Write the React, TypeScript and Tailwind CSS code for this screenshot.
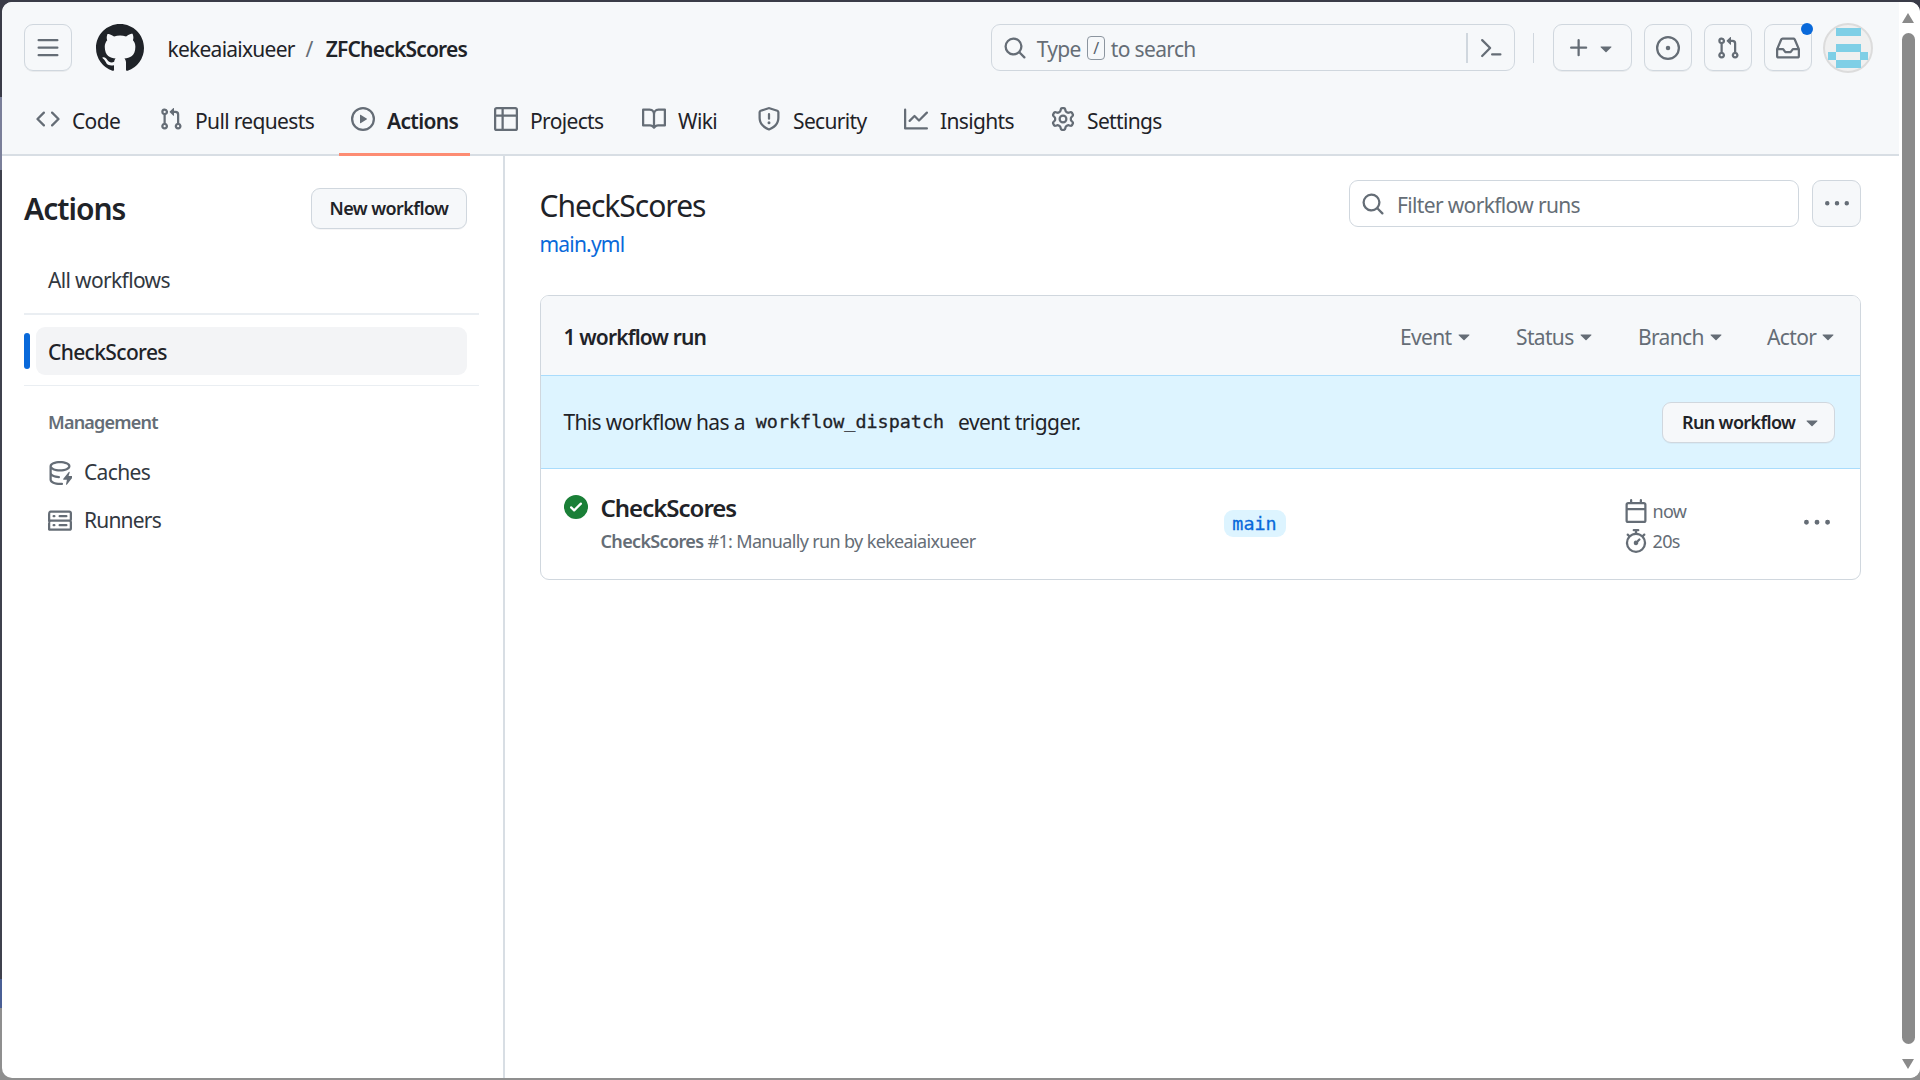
import React from "react";

function Octicon({ size, className, d }: { size: number; className?: string; d: string[] }) {
  return (
    <svg width={size} height={size} viewBox="0 0 16 16" fill="currentColor" className={`shrink-0 ${className ?? ""}`}>
      {d.map((p) => <path key={p} d={p} />)}
    </svg>
  );
}
const BARS = ["M1 2.75A.75.75 0 0 1 1.75 2h12.5a.75.75 0 0 1 0 1.5H1.75A.75.75 0 0 1 1 2.75Zm0 5A.75.75 0 0 1 1.75 7h12.5a.75.75 0 0 1 0 1.5H1.75A.75.75 0 0 1 1 7.75ZM1.75 12h12.5a.75.75 0 0 1 0 1.5H1.75a.75.75 0 0 1 0-1.5Z"];
const MARK = ["M8 0c4.42 0 8 3.58 8 8a8.013 8.013 0 0 1-5.45 7.59c-.4.08-.55-.17-.55-.38 0-.27.01-1.13.01-2.2 0-.75-.25-1.23-.54-1.48 1.78-.2 3.65-.88 3.65-3.95 0-.88-.31-1.59-.82-2.15.08-.2.36-1.02-.08-2.12 0 0-.67-.22-2.2.82-.64-.18-1.32-.27-2-.27-.68 0-1.36.09-2 .27-1.53-1.03-2.2-.82-2.2-.82-.44 1.1-.16 1.92-.08 2.12-.51.56-.82 1.28-.82 2.15 0 3.06 1.86 3.75 3.64 3.95-.23.2-.44.55-.51 1.07-.46.21-1.61.55-2.33-.66-.15-.24-.6-.83-1.23-.82-.67.01-.27.38.01.53.34.19.73.9.82 1.13.16.45.68 1.31 2.69.94 0 .67.01 1.3.01 1.49 0 .21-.15.45-.55.38A7.995 7.995 0 0 1 0 8c0-4.42 3.58-8 8-8Z"];
const CACHE = [
  "M2.5 5.724V8c0 .248.238.7 1.169 1.159.874.43 2.144.745 3.62.822a.75.75 0 1 1-.078 1.498c-1.622-.085-3.102-.432-4.204-.975a5.565 5.565 0 0 1-.507-.28V12.5c0 .133.058.318.282.551.227.237.591.483 1.101.707 1.015.447 2.47.742 4.117.742.406 0 .802-.018 1.183-.052a.751.751 0 1 1 .134 1.494C8.89 15.98 8.45 16 8 16c-1.805 0-3.475-.32-4.721-.869-.623-.274-1.173-.619-1.579-1.041-.408-.425-.7-.964-.7-1.59v-9c0-.626.292-1.165.7-1.591.406-.42.956-.766 1.579-1.04C4.525.32 6.195 0 8 0c1.806 0 3.476.32 4.721.869.623.274 1.173.619 1.579 1.041.408.425.7.964.7 1.59 0 .626-.292 1.165-.7 1.591-.406.42-.956.766-1.578 1.04C11.475 6.68 9.805 7 8 7c-1.805 0-3.475-.32-4.721-.869a6.15 6.15 0 0 1-.779-.407Zm0-2.224c0 .133.058.318.282.551.227.237.591.483 1.101.707C4.898 5.205 6.353 5.5 8 5.5c1.646 0 3.101-.295 4.118-.742.508-.224.873-.471 1.1-.708.224-.232.282-.417.282-.55 0-.133-.058-.318-.282-.551-.227-.237-.591-.483-1.101-.707C11.102 1.795 9.647 1.5 8 1.5c-1.646 0-3.101.295-4.118.742-.508.224-.873.471-1.1.708-.224.232-.282.417-.282.55Z",
  "M14.49 7.582a.375.375 0 0 0-.66-.313l-3.625 4.625a.375.375 0 0 0 .295.606h2.127l-.619 2.922a.375.375 0 0 0 .666.304l3.125-4.125A.375.375 0 0 0 15.5 10h-1.778l.769-2.418Z",
];
const CODE = ["m11.28 3.22 4.25 4.25a.75.75 0 0 1 0 1.06l-4.25 4.25a.749.749 0 0 1-1.275-.326.749.749 0 0 1 .215-.734L13.94 8l-3.72-3.72a.749.749 0 0 1 .326-1.275.749.749 0 0 1 .734.215Zm-6.56 0a.751.751 0 0 1 1.042.018.751.751 0 0 1 .018 1.042L2.06 8l3.72 3.72a.749.749 0 0 1-.326 1.275.749.749 0 0 1-.734-.215L.47 8.53a.75.75 0 0 1 0-1.06Z"];
const PR = ["M1.5 3.25a2.25 2.25 0 1 1 3 2.122v5.256a2.251 2.251 0 1 1-1.5 0V5.372A2.25 2.25 0 0 1 1.5 3.25Zm5.677-.177L9.573.677A.25.25 0 0 1 10 .854V2.5h1A2.5 2.5 0 0 1 13.5 5v5.628a2.251 2.251 0 1 1-1.5 0V5a1 1 0 0 0-1-1h-1v1.646a.25.25 0 0 1-.427.177L7.177 3.427a.25.25 0 0 1 0-.354ZM3.75 2.5a.75.75 0 1 0 0 1.5.75.75 0 0 0 0-1.5Zm0 9.5a.75.75 0 1 0 0 1.5.75.75 0 0 0 0-1.5Zm8.25.75a.75.75 0 1 0 1.5 0 .75.75 0 0 0-1.5 0Z"];
const PLAY = ["M8 0a8 8 0 1 1 0 16A8 8 0 0 1 8 0ZM1.5 8a6.5 6.5 0 1 0 13 0 6.5 6.5 0 0 0-13 0Zm4.879-2.773 4.264 2.559a.25.25 0 0 1 0 .428l-4.264 2.559A.25.25 0 0 1 6 10.559V5.442a.25.25 0 0 1 .379-.215Z"];
const TABLE = ["M0 1.75C0 .784.784 0 1.75 0h12.5C15.216 0 16 .784 16 1.75v12.5A1.75 1.75 0 0 1 14.25 16H1.75A1.75 1.75 0 0 1 0 14.25ZM6.5 6.5v8h7.75a.25.25 0 0 0 .25-.25V6.5Zm8-1.5V1.75a.25.25 0 0 0-.25-.25H6.5V5Zm-13 1.5v7.75c0 .138.112.25.25.25H5v-8ZM5 5V1.5H1.75a.25.25 0 0 0-.25.25V5Z"];
const BOOK = ["M0 1.75A.75.75 0 0 1 .75 1h4.253c1.227 0 2.317.59 3 1.501A3.743 3.743 0 0 1 11.006 1h4.245a.75.75 0 0 1 .75.75v10.5a.75.75 0 0 1-.75.75h-4.507a2.25 2.25 0 0 0-1.591.659l-.622.621a.75.75 0 0 1-1.06 0l-.622-.621A2.25 2.25 0 0 0 5.258 13H.75a.75.75 0 0 1-.75-.75Zm7.251 10.324.004-5.073-.002-2.253A2.25 2.25 0 0 0 5.003 2.5H1.5v9h3.757a3.75 3.75 0 0 1 1.994.574ZM8.755 4.75l-.004 7.322a3.752 3.752 0 0 1 1.992-.572H14.5v-9h-3.495a2.25 2.25 0 0 0-2.25 2.25Z"];
const SHIELD = ["M7.467.133a1.748 1.748 0 0 1 1.066 0l5.25 1.68A1.75 1.75 0 0 1 15 3.48V7c0 1.566-.32 3.182-1.303 4.682-.983 1.498-2.585 2.813-5.032 3.855a1.697 1.697 0 0 1-1.33 0c-2.447-1.042-4.049-2.357-5.032-3.855C1.32 10.182 1 8.566 1 7V3.48a1.75 1.75 0 0 1 1.217-1.667Zm.61 1.429a.25.25 0 0 0-.153 0l-5.25 1.68a.25.25 0 0 0-.174.238V7c0 1.358.275 2.666 1.057 3.86.784 1.194 2.121 2.34 4.366 3.297a.196.196 0 0 0 .154 0c2.245-.956 3.582-2.104 4.366-3.298C13.225 9.666 13.5 8.36 13.5 7V3.48a.251.251 0 0 0-.174-.237l-5.25-1.68ZM8.75 4.75v3a.75.75 0 0 1-1.5 0v-3a.75.75 0 0 1 1.5 0ZM9 10.5a1 1 0 1 1-2 0 1 1 0 0 1 2 0Z"];
const GRAPH = ["M1.5 1.75V13.5h13.75a.75.75 0 0 1 0 1.5H.75a.75.75 0 0 1-.75-.75V1.75a.75.75 0 0 1 1.5 0Zm14.28 2.53-5.25 5.25a.75.75 0 0 1-1.06 0L7 7.06 4.28 9.78a.751.751 0 0 1-1.042-.018.751.751 0 0 1-.018-1.042l3.25-3.25a.75.75 0 0 1 1.06 0L10 7.94l4.72-4.72a.751.751 0 0 1 1.042.018.751.751 0 0 1 .018 1.042Z"];
const GEAR = ["M8 0a8.2 8.2 0 0 1 .701.031C9.444.095 9.99.645 10.16 1.29l.288 1.107c.018.066.079.158.212.224.231.114.454.243.668.386.123.082.233.09.299.071l1.103-.303c.644-.176 1.392.021 1.82.63.27.385.506.792.704 1.218.315.675.111 1.422-.364 1.891l-.814.806c-.049.048-.098.147-.088.294.016.257.016.515 0 .772-.01.147.038.246.088.294l.814.806c.475.469.679 1.216.364 1.891a7.977 7.977 0 0 1-.704 1.217c-.428.61-1.176.807-1.82.63l-1.102-.302c-.067-.019-.177-.011-.3.071a5.909 5.909 0 0 1-.668.386c-.133.066-.194.158-.211.224l-.29 1.106c-.168.646-.715 1.196-1.458 1.26a8.006 8.006 0 0 1-1.402 0c-.743-.064-1.289-.614-1.458-1.26l-.289-1.106c-.018-.066-.079-.158-.212-.224a5.738 5.738 0 0 1-.668-.386c-.123-.082-.233-.09-.299-.071l-1.103.303c-.644.176-1.392-.021-1.82-.63a8.12 8.12 0 0 1-.704-1.218c-.315-.675-.111-1.422.363-1.891l.815-.806c.05-.048.098-.147.088-.294a6.214 6.214 0 0 1 0-.772c.01-.147-.038-.246-.088-.294l-.815-.806C.635 6.045.431 5.298.746 4.623a7.92 7.92 0 0 1 .704-1.217c.428-.61 1.176-.807 1.82-.63l1.102.302c.067.019.177.011.3-.071.214-.143.437-.272.668-.386.133-.066.194-.158.211-.224l.29-1.106C6.009.645 6.556.095 7.299.03 7.53.01 7.764 0 8 0Zm-.571 1.525c-.036.003-.108.036-.137.146l-.289 1.105c-.147.561-.549.967-.998 1.189-.173.086-.34.183-.5.29-.417.278-.97.423-1.529.27l-1.103-.303c-.109-.03-.175.016-.195.045-.22.312-.412.644-.573.99-.014.031-.021.11.059.19l.815.806c.411.406.562.957.53 1.456a4.709 4.709 0 0 0 0 .582c.032.499-.119 1.05-.53 1.456l-.815.806c-.081.08-.073.159-.059.19.162.346.353.677.573.989.02.03.085.076.195.046l1.102-.303c.56-.153 1.113-.008 1.53.27.161.107.328.204.501.29.447.222.85.629.997 1.189l.289 1.105c.029.109.101.143.137.146a6.6 6.6 0 0 0 1.142 0c.036-.003.108-.036.137-.146l.289-1.105c.147-.561.549-.967.998-1.189.173-.086.34-.183.5-.29.417-.278.97-.423 1.529-.27l1.103.303c.109.029.175-.016.195-.045.22-.313.411-.644.573-.99.014-.031.021-.11-.059-.19l-.815-.806c-.411-.406-.562-.957-.53-1.456a4.709 4.709 0 0 0 0-.582c-.032-.499.119-1.05.53-1.456l.815-.806c.081-.08.073-.159.059-.19a6.464 6.464 0 0 0-.573-.989c-.02-.03-.085-.076-.195-.046l-1.102.303c-.56.153-1.113.008-1.53-.27a4.44 4.44 0 0 0-.501-.29c-.447-.222-.85-.629-.997-1.189l-.289-1.105c-.029-.11-.101-.143-.137-.146a6.6 6.6 0 0 0-1.142 0ZM11 8a3 3 0 1 1-6 0 3 3 0 0 1 6 0ZM9.5 8a1.5 1.5 0 1 0-3.001.001A1.5 1.5 0 0 0 9.5 8Z"];
const SEARCH = ["M10.68 11.74a6 6 0 0 1-7.922-8.982 6 6 0 0 1 8.982 7.922l3.04 3.04a.749.749 0 0 1-.326 1.275.749.749 0 0 1-.734-.215ZM11.5 7a4.499 4.499 0 1 0-8.997 0A4.499 4.499 0 0 0 11.5 7Z"];
const PALETTE = ["m6.354 8.04-4.773 4.773a.75.75 0 1 0 1.061 1.06L7.945 8.57a.75.75 0 0 0 0-1.06L2.642 2.206a.75.75 0 0 0-1.06 1.061L6.353 8.04ZM8.75 11.5a.75.75 0 0 0 0 1.5h5.5a.75.75 0 0 0 0-1.5h-5.5Z"];
const PLUS = ["M7.75 2a.75.75 0 0 1 .75.75V7h4.25a.75.75 0 0 1 0 1.5H8.5v4.25a.75.75 0 0 1-1.5 0V8.5H2.75a.75.75 0 0 1 0-1.5H7V2.75A.75.75 0 0 1 7.75 2Z"];
const CARET = ["m4.427 7.427 3.396 3.396a.25.25 0 0 0 .354 0l3.396-3.396A.25.25 0 0 0 11.396 7H4.604a.25.25 0 0 0-.177.427Z"];
const ISSUE = ["M8 9.5a1.5 1.5 0 1 0 0-3 1.5 1.5 0 0 0 0 3Z", "M8 0a8 8 0 1 1 0 16A8 8 0 0 1 8 0ZM1.5 8a6.5 6.5 0 1 0 13 0 6.5 6.5 0 0 0-13 0Z"];
const INBOX = ["M2.8 2.06A1.75 1.75 0 0 1 4.41 1h7.18c.7 0 1.333.417 1.61 1.06l2.74 6.395c.04.093.06.194.06.295v4.5A1.75 1.75 0 0 1 14.25 15H1.75A1.75 1.75 0 0 1 0 13.25v-4.5c0-.101.02-.202.06-.295Zm1.61.44a.25.25 0 0 0-.23.152L1.887 8H4.75a.75.75 0 0 1 .6.3L6.625 10h2.75l1.275-1.7a.75.75 0 0 1 .6-.3h2.863L11.82 2.652a.25.25 0 0 0-.23-.152Zm10.09 7h-2.875l-1.275 1.7a.75.75 0 0 1-.6.3h-3.5a.75.75 0 0 1-.6-.3L4.375 9.5H1.5v3.75c0 .138.112.25.25.25h12.5a.25.25 0 0 0 .25-.25Z"];
const KEBAB = ["M8 9a1.5 1.5 0 1 0 0-3 1.5 1.5 0 0 0 0 3ZM1.5 9a1.5 1.5 0 1 0 0-3 1.5 1.5 0 0 0 0 3Zm13 0a1.5 1.5 0 1 0 0-3 1.5 1.5 0 0 0 0 3Z"];
const SERVER = ["M1.75 1h12.5c.966 0 1.75.784 1.75 1.75v4c0 .372-.116.717-.314 1 .198.283.314.628.314 1v4a1.75 1.75 0 0 1-1.75 1.75H1.75A1.75 1.75 0 0 1 0 13.75v-4c0-.372.116-.717.314-1a1.739 1.739 0 0 1-.314-1v-4C0 1.784.784 1 1.75 1ZM1.5 2.75v4c0 .138.112.25.25.25h12.5a.25.25 0 0 0 .25-.25v-4a.25.25 0 0 0-.25-.25H1.75a.25.25 0 0 0-.25.25Zm.25 5.75a.25.25 0 0 0-.25.25v4c0 .138.112.25.25.25h12.5a.25.25 0 0 0 .25-.25v-4a.25.25 0 0 0-.25-.25ZM7 4.75A.75.75 0 0 1 7.75 4h4.5a.75.75 0 0 1 0 1.5h-4.5A.75.75 0 0 1 7 4.75ZM7.75 10h4.5a.75.75 0 0 1 0 1.5h-4.5a.75.75 0 0 1 0-1.5ZM3 4.75A.75.75 0 0 1 3.75 4h.5a.75.75 0 0 1 0 1.5h-.5A.75.75 0 0 1 3 4.75ZM3.75 10h.5a.75.75 0 0 1 0 1.5h-.5a.75.75 0 0 1 0-1.5Z"];
const CHECK = ["M8 16A8 8 0 1 1 8 0a8 8 0 0 1 0 16Zm3.78-9.72a.751.751 0 0 0-.018-1.042.751.751 0 0 0-1.042-.018L6.75 9.19 5.28 7.72a.751.751 0 0 0-1.042.018.751.751 0 0 0-.018 1.042l2 2a.75.75 0 0 0 1.06 0Z"];
const CALENDAR = ["M4.75 0a.75.75 0 0 1 .75.75V2h5V.75a.75.75 0 0 1 1.5 0V2h1.25c.966 0 1.75.784 1.75 1.75v10.5A1.75 1.75 0 0 1 13.25 16H2.75A1.75 1.75 0 0 1 1 14.25V3.75C1 2.784 1.784 2 2.75 2H4V.75A.75.75 0 0 1 4.75 0ZM2.5 7.5v6.75c0 .138.112.25.25.25h10.5a.25.25 0 0 0 .25-.25V7.5Zm10.75-4H2.75a.25.25 0 0 0-.25.25V6h11V3.75a.25.25 0 0 0-.25-.25Z"];
const STOPWATCH = ["M5.75.75A.75.75 0 0 1 6.5 0h3a.75.75 0 0 1 0 1.5h-.75v1l-.001.041a6.724 6.724 0 0 1 3.464 1.435l.007-.006.75-.75a.749.749 0 0 1 1.275.326.749.749 0 0 1-.215.734l-.75.75-.006.007a6.75 6.75 0 1 1-10.548 0L2.72 5.03l-.75-.75a.751.751 0 0 1 .018-1.042.751.751 0 0 1 1.042-.018l.75.75.007.006A6.72 6.72 0 0 1 7.25 2.541V1.5H6.5a.75.75 0 0 1-.75-.75ZM8 14.5a5.25 5.25 0 1 0-.001-10.501A5.25 5.25 0 0 0 8 14.5Zm.389-6.7 1.33-1.33a.75.75 0 1 1 1.061 1.06L9.45 8.861A1.503 1.503 0 0 1 8 10.75a1.499 1.499 0 1 1 .389-2.95Z"];

const tabs = [
  { label: "Code", d: CODE, w: "w-[123px]" },
  { label: "Pull requests", d: PR, w: "w-[192px]" },
  { label: "Actions", d: PLAY, w: "w-[143px]", active: true },
  { label: "Projects", d: TABLE, w: "w-[148px]" },
  { label: "Wiki", d: BOOK, w: "w-[115px]" },
  { label: "Security", d: SHIELD, w: "w-[147px]" },
  { label: "Insights", d: GRAPH, w: "w-[147px]" },
  { label: "Settings", d: GEAR, w: "w-[140px]" },
];

function HeaderBtn({ children, w = "w-[48px]" }: { children: React.ReactNode; w?: string }) {
  return (
    <div className={`relative flex h-[47px] ${w} items-center justify-center rounded-[9px] border-[1.5px] border-[#d0d7de] text-[#656d76] shadow-[0_1px_0_rgba(31,35,40,0.06)]`}>
      {children}
    </div>
  );
}

function Filter({ label, w }: { label: string; w: string }) {
  return (
    <div className={`flex items-center ${w}`}>
      <span className="pt-[4px]">{label}</span>
      <Octicon size={24} d={CARET} />
    </div>
  );
}

export default function App() {
  return (
    <div className="flex h-screen w-full overflow-hidden bg-[linear-gradient(#3a3c48_0,#3a3c48_97px,#7a7f99_97px,#7a7f99_170px,#3f414d_170px,#3f414d_979px,#4a5f95_979px,#4a5f95_1008px,#8f8f8f_1008px)] pb-[2px] pl-[2px] pt-[2px] font-['Noto_Sans',sans-serif] text-[21px] tracking-[-0.65px] text-[#1f2328]">
      <div className="flex min-w-0 flex-1 overflow-hidden rounded-[10px] bg-white">
        <div className="flex min-w-0 flex-1 flex-col">
          <header className="h-[154px] shrink-0 border-b-2 border-[#d8dee4] bg-[#f6f8fa]">
            <div className="mt-[22px] flex h-[47px] items-center pl-[21.5px]">
              <HeaderBtn><Octicon size={24} d={BARS} /></HeaderBtn>
              <Octicon size={48} d={MARK} className="ml-[24px] text-[#1f2328]" />
              <span className="ml-[24px] w-[126px] pt-[4px] tracking-[-0.75px]">kekeaiaixueer</span>
              <span className="ml-[12px] pt-[4px] text-[#656d76]">/</span>
              <span className="ml-[13px] w-[142px] pt-[4px] font-semibold tracking-[-0.8px]">ZFCheckScores</span>
              <div className="ml-[523px] flex h-[47px] w-[524px] items-center rounded-[9px] border-[1.5px] border-[#d0d7de] text-[#656d76]">
                <Octicon size={24} d={SEARCH} className="ml-[11px]" />
                <span className="ml-[10px] pt-[4px]">Type</span>
                <span className="mx-[6px] flex h-[24px] w-[18px] items-center justify-center rounded-[4px] border-[1.5px] border-[#8c959f] text-[16px] text-[#57606a]">/</span>
                <span className="pt-[4px]">to search</span>
                <span className="ml-auto h-[30px] w-[1.5px] bg-[#d0d7de]" />
                <Octicon size={24} d={PALETTE} className="mx-[11px]" />
              </div>
              <span className="ml-[18px] h-[30px] w-[1.5px] bg-[#d0d7de]" />
              <div className="ml-[19px] flex gap-[12px]">
                <HeaderBtn w="w-[79px]">
                  <Octicon size={24} d={PLUS} />
                  <Octicon size={24} d={CARET} className="ml-[3px]" />
                </HeaderBtn>
                <HeaderBtn><Octicon size={24} d={ISSUE} /></HeaderBtn>
                <HeaderBtn><Octicon size={24} d={PR} /></HeaderBtn>
                <HeaderBtn>
                  <Octicon size={24} d={INBOX} />
                  <span className="absolute right-[-2px] top-[-2px] h-[12px] w-[12px] rounded-full bg-[#0969da]" />
                </HeaderBtn>
              </div>
              <div className="ml-[11px] flex h-[50px] w-[50px] flex-col items-center rounded-full border-2 border-[#dcdcdc] bg-[#f0f0f0] pt-[3px]">
                <div className="h-[8px] w-[25px] bg-[#7fcfe6]" />
                <div className="mt-[8px] h-[8px] w-[25px] bg-[#7fcfe6]" />
                <div className="flex h-[8px] w-[40px] justify-between">
                  <div className="h-[8px] w-[8px] bg-[#7fcfe6]" />
                  <div className="h-[8px] w-[8px] bg-[#7fcfe6]" />
                </div>
                <div className="h-[8px] w-[25px] bg-[#7fcfe6]" />
              </div>
            </div>
            <nav className="mt-[19px] flex h-[64px] pl-[22px]">
              {tabs.map(({ label, d, w, active }) => (
                <div key={label} className={`relative flex ${w} items-center pb-[6px] pl-[12px]`}>
                  <Octicon size={24} d={d} className="text-[#656d76]" />
                  <span className={`ml-[12px] pt-[6px] ${active ? "font-semibold" : ""}`}>{label}</span>
                  {active && <span className="absolute bottom-[-2px] left-0 h-[3px] w-[131px] bg-[#fd8c73]" />}
                </div>
              ))}
            </nav>
          </header>
          <div className="flex min-h-0 flex-1">
            <aside className="w-[503px] shrink-0 border-r-2 border-[#d8dee4] pl-[22px] pr-[24px]">
              <div className="mt-[32px] flex h-[41px] items-center justify-between pr-[12px]">
                <h1 className="text-[30px] font-semibold tracking-[-1px]">Actions</h1>
                <div className="flex h-[41px] w-[156px] items-center justify-center rounded-[9px] border-[1.5px] border-[#d0d7de] bg-[#f6f8fa] text-[18px] font-semibold tracking-[-0.6px] shadow-[0_1px_0_rgba(31,35,40,0.04)]">New workflow</div>
              </div>
              <div className="mt-[28px] flex h-[48px] items-center pl-[24px] text-[#32383f]">All workflows</div>
              <div className="mt-[8px] h-[1.5px] bg-[#eaeef2]" />
              <div className="mt-[12px] flex h-[48px] items-center">
                <span className="h-[36px] w-[6px] rounded-[3px] bg-[#0969da]" />
                <div className="ml-[6px] mr-[12px] flex h-[48px] flex-1 items-center rounded-[9px] bg-[#f3f4f6] pl-[12px] pt-[4px] font-medium">CheckScores</div>
              </div>
              <div className="mt-[10px] h-[1.5px] bg-[#eaeef2]" />
              <div className="mt-[24px] pl-[24px] text-[18px] font-semibold leading-[24px] tracking-[-0.8px] text-[#656d76]">Management</div>
              <div className="mt-[14.5px] flex h-[48px] flex-col justify-center pl-[24px]">
                <div className="flex items-center text-[#32383f]"><Octicon size={24} d={CACHE} className="text-[#656d76]" /><span className="ml-[12px]">Caches</span></div>
              </div>
              <div className="flex h-[48px] flex-col justify-center pl-[24px]">
                <div className="flex items-center text-[#32383f]"><Octicon size={24} d={SERVER} className="text-[#656d76]" /><span className="ml-[12px] tracking-[-0.8px]">Runners</span></div>
              </div>
            </aside>
            <main className="min-w-0 flex-1 pl-[34.5px]">
              <div className="mt-[24px] flex h-[47px] items-center">
                <h2 className="pt-[4px] text-[30px] tracking-[-1px]">CheckScores</h2>
                <div className="ml-auto flex h-[47px] w-[450px] items-center rounded-[9px] border-[1.5px] border-[#d0d7de] text-[#656d76]">
                  <Octicon size={24} d={SEARCH} className="ml-[11px]" />
                  <span className="ml-[12px] pt-[4px]">Filter workflow runs</span>
                </div>
                <div className="ml-[13px] mr-[38px] flex h-[47px] w-[49px] items-center justify-center rounded-[9px] border-[1.5px] border-[#d0d7de] bg-[#f6f8fa] text-[#656d76]"><Octicon size={24} d={KEBAB} /></div>
              </div>
              <div className="mt-[3px] leading-[28px] tracking-[-0.8px] text-[#0969da]">main.yml</div>
              <div className="mr-[38px] mt-[37px] overflow-hidden rounded-[9px] border-[1.5px] border-[#d0d7de]">
                <div className="flex h-[79px] items-center bg-[#f6f8fa] pl-[23px] pr-[18px]">
                  <span className="pt-[4px] font-semibold tracking-[-0.85px]">1 workflow run</span>
                  <div className="ml-auto flex text-[#656d76]">
                    <Filter label="Event" w="w-[116px]" />
                    <Filter label="Status" w="w-[122px]" />
                    <Filter label="Branch" w="w-[129px]" />
                    <Filter label="Actor" w="w-[75px]" />
                  </div>
                </div>
                <div className="flex h-[94px] items-center border-y-[1.5px] border-[#a9dcfc] bg-[#ddf4ff] pl-[23px] pr-[25px]">
                  <span className="pt-[2px]">This workflow has a</span>
                  <code className="ml-[11px] font-['DejaVu_Sans_Mono',monospace] text-[18.4px] tracking-normal [-webkit-text-stroke:0.3px]">workflow_dispatch</code>
                  <span className="ml-[14px] pt-[2px] tracking-[-0.55px]">event trigger.</span>
                  <div className="ml-auto flex h-[41px] w-[173px] items-center rounded-[9px] border-[1.5px] border-[#d0d7de] bg-[#f6f8fa] pl-[19px] text-[18px] font-semibold shadow-[0_1px_0_rgba(31,35,40,0.04)]">
                    <span>Run workflow</span>
                    <Octicon size={24} d={CARET} className="ml-[5px] text-[#656d76]" />
                  </div>
                </div>
                <div className="flex h-[110px] pl-[23px]">
                  <Octicon size={24} d={CHECK} className="mt-[26px] text-[#1a7f37]" />
                  <div className="ml-[13px] mt-[23px] w-[623px]">
                    <div className="text-[24px] font-semibold leading-[32px] tracking-[-1px]">CheckScores</div>
                    <div className="mt-[3.5px] text-[18px] leading-[27px] text-[#656d76]"><span className="font-semibold">CheckScores</span> #1: Manually run by kekeaiaixueer</div>
                  </div>
                  <div className="mt-[41px] flex h-[27px] w-[62px] items-center justify-center rounded-[9px] bg-[#ddf4ff] font-['DejaVu_Sans_Mono',monospace] text-[18.4px] tracking-normal text-[#0969da] [-webkit-text-stroke:0.3px]">main</div>
                  <div className="ml-[338px] mt-[27px] text-[18px] text-[#656d76]">
                    <div className="flex h-[30px] items-center"><Octicon size={24} d={CALENDAR} /><span className="ml-[5px]">now</span></div>
                    <div className="flex h-[30px] items-center"><Octicon size={24} d={STOPWATCH} /><span className="ml-[5px]">20s</span></div>
                  </div>
                  <Octicon size={26} d={KEBAB} className="ml-[118px] mt-[41px] text-[#656d76]" />
                </div>
              </div>
            </main>
          </div>
        </div>
        <div className="flex w-[21px] shrink-0 flex-col items-center bg-white pr-[3px]">
          <div className="mt-[11px] h-0 w-0 border-x-[6px] border-b-[10px] border-x-transparent border-b-[#8a8a8a]" />
          <div className="mt-[10px] w-[13px] flex-1 rounded-full bg-[#8a8a8a]" />
          <div className="mb-[9px] mt-[15px] h-0 w-0 border-x-[6px] border-t-[10px] border-x-transparent border-t-[#8a8a8a]" />
        </div>
      </div>
    </div>
  );
}
